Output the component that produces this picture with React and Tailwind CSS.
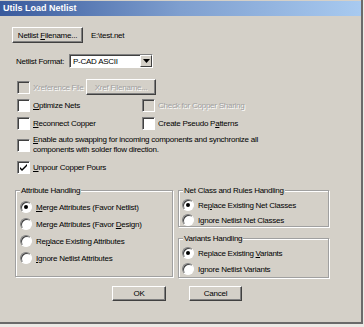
import React from "react";

const Check = ({ checked, disabled }) => (
  <span
    className={`inline-flex h-[13px] w-[13px] shrink-0 items-center justify-center border border-t-[#808080] border-l-[#808080] border-b-white border-r-white ${
      disabled ? "bg-[#d4d0c8]" : "bg-white"
    } shadow-[inset_1px_1px_0_#404040]`}
  >
    {checked && (
      <svg width="9" height="9" viewBox="0 0 9 9">
        <path d="M1 4 L3 6 L8 1 L8 3 L3 8 L1 6 Z" fill="#000" />
      </svg>
    )}
  </span>
);

const Radio = ({ checked }) => (
  <span className="inline-flex h-[12px] w-[12px] shrink-0 items-center justify-center rounded-full border border-t-[#808080] border-l-[#808080] border-b-white border-r-white bg-white shadow-[inset_1px_1px_0_#404040]">
    {checked && <span className="h-[4px] w-[4px] rounded-full bg-black" />}
  </span>
);

const dim = "text-[#a0a0a0] [text-shadow:1px_1px_0_#ffffff]";

const CheckRow = ({ label, checked, disabled, className = "" }) => (
  <div className={`flex h-[13px] items-center gap-[3px] ${className}`}>
    <Check checked={checked} disabled={disabled} />
    <span className={disabled ? dim : ""}>{label}</span>
  </div>
);

const RadioRow = ({ label, checked, className = "" }) => (
  <div className={`flex h-[12px] items-center gap-[4px] ${className}`}>
    <Radio checked={checked} />
    <span>{label}</span>
  </div>
);

const Btn = ({ children, className = "", disabled }) => (
  <div
    className={`flex items-center justify-center border border-t-white border-l-white border-b-[#404040] border-r-[#404040] bg-[#d4d0c8] shadow-[inset_-1px_-1px_0_#808080] ${
      disabled ? dim : ""
    } ${className}`}
  >
    {children}
  </div>
);

const Group = ({ title, children, className = "" }) => (
  <div
    className={`relative border border-[#a0a0a0] shadow-[1px_1px_0_white,inset_1px_1px_0_white] ${className}`}
  >
    <span className="absolute left-[4px] top-[-6px] bg-[#d4d0c8] px-[1px] leading-[11px]">
      {title}
    </span>
    {children}
  </div>
);

const U = ({ children }) => <span className="underline">{children}</span>;

export default function App() {
  return (
    <div className="h-[327px] w-[364px] whitespace-nowrap bg-[#eceae6] font-['Liberation_Sans',Arial,sans-serif] text-[8px] leading-[11px] tracking-[-0.25px] text-black">
      <div className="flex h-[324px] w-[363px] flex-col border-r-2 border-b-2 border-r-[#6a6a6a] border-b-[#6a6a6a] bg-[#d4d0c8]">
        {/* title bar */}
        <div className="mt-[1px] flex h-[15px] items-center bg-gradient-to-r from-[#3a5a9c] via-[#7f9fcf] to-[#a8caf0] pl-[3px] text-[9px] font-bold tracking-normal text-white">
          Utils Load Netlist
        </div>

        <div className="flex flex-col pl-[12px]">
          <div className="mt-[11px] flex items-center gap-[8px]">
            <Btn className="h-[16px] w-[71px]">
              Netlist&nbsp;<U>F</U>ilename...
            </Btn>
            <span>E:\test.net</span>
          </div>

          <div className="mt-[11px] flex items-center pl-[4px]">
            <span className="w-[53px]">Netlist Format:</span>
            <div className="flex h-[14px] w-[84px] items-center justify-between border border-t-[#808080] border-l-[#808080] border-b-white border-r-white bg-white pl-[3px] shadow-[inset_1px_1px_0_#404040]">
              <span>P-CAD ASCII</span>
              <span className="flex h-[12px] w-[12px] items-center justify-center border border-t-white border-l-white border-b-[#404040] border-r-[#404040] bg-[#d4d0c8]">
                <svg width="7" height="4" viewBox="0 0 7 4">
                  <path d="M0 0 H7 L3.5 4 Z" fill="#000" />
                </svg>
              </span>
            </div>
          </div>

          <div className="mt-[11px] flex items-center pl-[5px]">
            <CheckRow label="Xreference File" disabled className="w-[69px]" />
            <Btn disabled className="h-[16px] w-[70px]">
              Xref Filename...
            </Btn>
          </div>

          <div className="mt-[4px] flex items-center pl-[5px]">
            <CheckRow label={<><U>O</U>ptimize Nets</>} className="w-[125px]" />
            <CheckRow label="Check for Copper Sharing" disabled />
          </div>

          <div className="mt-[5px] flex items-center pl-[5px]">
            <CheckRow label={<><U>R</U>econnect Copper</>} className="w-[125px]" />
            <CheckRow label={<>Create Pseudo P<U>a</U>tterns</>} />
          </div>

          <div className="mt-[5px] flex items-center gap-[3px] pl-[5px]">
            <Check />
            <span className="leading-[10px]">
              <U>E</U>nable auto swapping for incoming components and synchronize all
              <br />
              components with solder flow direction.
            </span>
          </div>

          <CheckRow
            className="mt-[6px] pl-[5px]"
            checked
            label={<><U>U</U>npour Copper Pours</>}
          />
        </div>

        <div className="mt-[16px] flex gap-[5px] pl-[15px]">
          <Group title="Attribute Handling" className="flex h-[87px] w-[158px] flex-col gap-[5px] pl-[4px] pt-[10px]">
            <RadioRow checked label={<><U>M</U>erge Attributes (Favor Netlist)</>} />
            <RadioRow label={<>Merge Attributes (Favor <U>D</U>esign)</>} />
            <RadioRow label={<>Re<U>p</U>lace Existing Attributes</>} />
            <RadioRow label={<><U>I</U>gnore Netlist Attributes</>} />
          </Group>
          <div className="flex flex-col gap-[11px]">
            <Group title="Net Class and Rules Handling" className="flex h-[37px] w-[151px] flex-col gap-[3px] pl-[3px] pt-[8px]">
              <RadioRow checked label={<>Re<U>p</U>lace Existing Net Classes</>} />
              <RadioRow label={<>I<U>g</U>nore Netlist Net Classes</>} />
            </Group>
            <Group title="Variants Handling" className="flex h-[40px] w-[151px] flex-col gap-[4px] pl-[3px] pt-[8px]">
              <RadioRow checked label={<>Replace Existing <U>V</U>ariants</>} />
              <RadioRow label="Ignore Netlist Variants" />
            </Group>
          </div>
        </div>

        <div className="mt-[8px] flex gap-[23px] pl-[112px]">
          <Btn className="h-[15px] w-[54px]">OK</Btn>
          <Btn className="h-[15px] w-[53px]">Cancel</Btn>
        </div>
      </div>
    </div>
  );
}
